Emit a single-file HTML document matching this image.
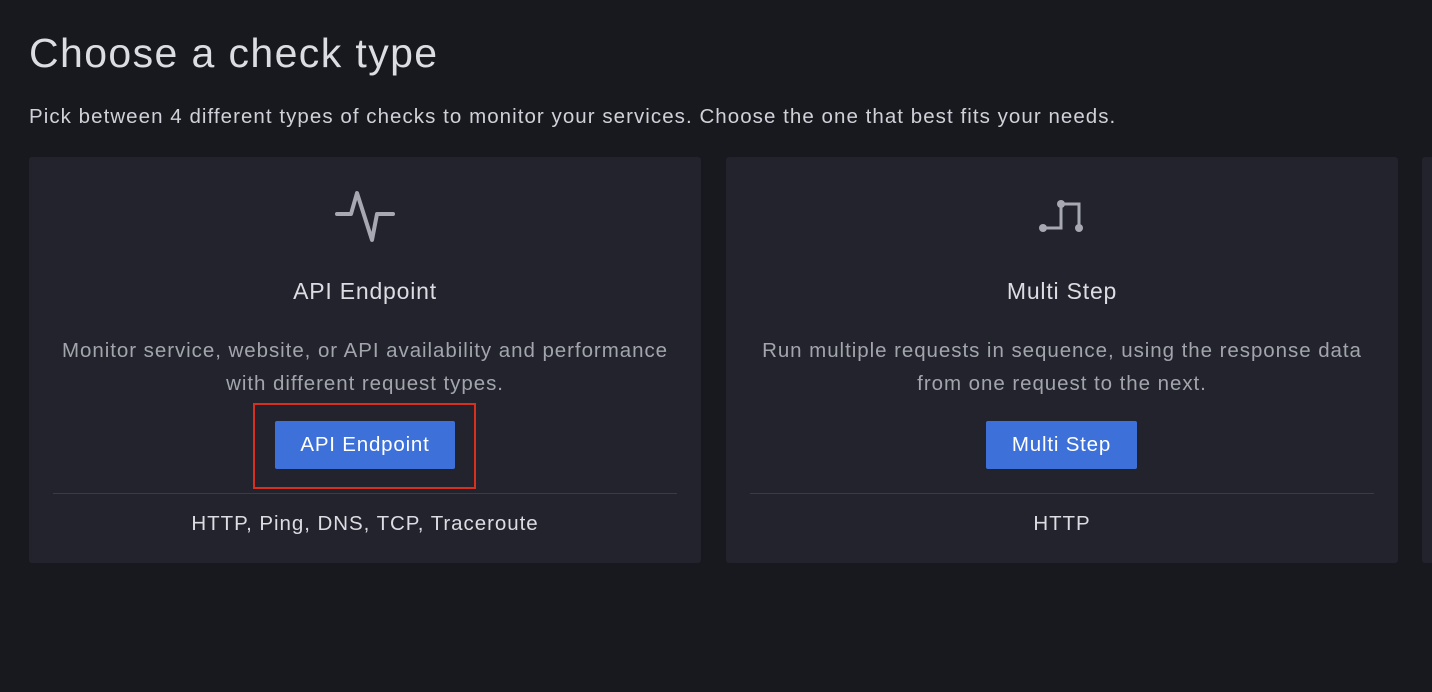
<!DOCTYPE html>
<html><head><style>
body{margin:0;width:1432px;height:692px;background:#18191f;font-family:"Liberation Sans",sans-serif;overflow:hidden;position:relative;color:#d8d9e0}
h1{position:absolute;left:29px;top:30px;margin:0;font-size:41px;font-weight:400;color:#dcdde3;letter-spacing:1.4px}
.sub{position:absolute;left:29px;top:105px;font-size:20.5px;color:#d0d1d8;letter-spacing:1.05px}
.card{position:absolute;top:157px;width:672px;height:406px;background:#22232c;border-radius:3px}
.card .t{position:absolute;left:0;right:0;top:121px;text-align:center;font-size:23px;color:#dcdde3;letter-spacing:0.8px}
.d{position:absolute;left:0;right:0;top:177px;text-align:center;font-size:20.5px;line-height:33px;color:#a3a5ad;letter-spacing:0.95px}
.btn{position:absolute;top:264px;height:48px;background:#3d71d9;color:#fff;font-size:20.5px;line-height:48px;text-align:center;border-radius:2px;letter-spacing:0.8px}
.hr{position:absolute;left:24px;right:24px;top:336px;height:1px;background:#3a3b45}
.f{position:absolute;left:0;right:0;top:355px;text-align:center;font-size:20.5px;color:#dcdde3;letter-spacing:0.95px}
svg{position:absolute}
</style></head><body>
<h1>Choose a check type</h1>
<div class="sub">Pick between 4 different types of checks to monitor your services. Choose the one that best fits your needs.</div>
<div class="card" style="left:29px">
<svg style="left:0;top:0" width="672" height="120"><path d="M308 57 H322 L328 36 L343 83 L348 57 H364" fill="none" stroke="#a7a8b2" stroke-width="4" stroke-linecap="round" stroke-linejoin="round"/></svg>
<div class="t">API Endpoint</div>
<div class="d">Monitor service, website, or API availability and performance<br>with different request types.</div>
<div class="btn" style="left:246px;width:180px">API Endpoint</div>
<div style="position:absolute;left:224px;top:246px;width:219px;height:82px;border:2px solid #d8301f"></div>
<div class="hr"></div>
<div class="f">HTTP, Ping, DNS, TCP, Traceroute</div>
</div>
<div class="card" style="left:726px">
<svg style="left:0;top:0" width="672" height="120"><path d="M317 71 H335 V47 H353 V71" fill="none" stroke="#a7a8b2" stroke-width="3"/><circle cx="317" cy="71" r="4" fill="#a7a8b2"/><circle cx="335" cy="47" r="4" fill="#a7a8b2"/><circle cx="353" cy="71" r="4" fill="#a7a8b2"/></svg>
<div class="t">Multi Step</div>
<div class="d">Run multiple requests in sequence, using the response data<br>from one request to the next.</div>
<div class="btn" style="left:260px;width:151px">Multi Step</div>
<div class="hr"></div>
<div class="f">HTTP</div>
</div>
<div class="card" style="left:1422px"></div>
</body></html>
